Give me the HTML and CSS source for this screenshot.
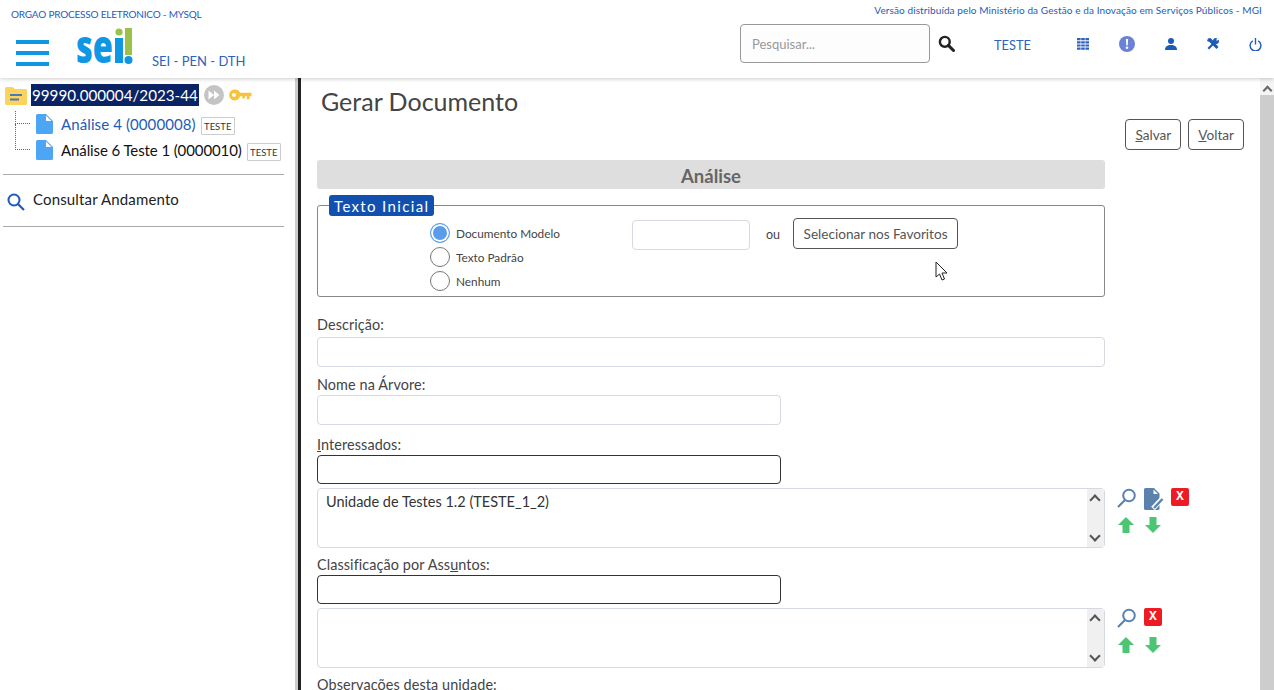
FILE: index.html
```html
<!DOCTYPE html>
<html>
<head>
    <title>SEI - Gerar Documento</title>
    <link rel="stylesheet" href="styles.css">
</head>
<body>
    <header class="topo">
        <div class="topo-linha1">
            <span class="orgao">ORGAO PROCESSO ELETRONICO - MYSQL</span>
            <span class="versao">Versão distribuída pelo Ministério da Gestão e da Inovação em Serviços Públicos - MGI</span>
        </div>
        <div class="topo-linha2">
            <div class="hamburguer"><i></i><i></i><i></i></div>
            <svg class="logo" width="58" height="70" viewBox="0 -15 58 70">
                <text x="0" y="36" class="logo-texto" textLength="37" lengthAdjust="spacingAndGlyphs">se</text>
                <rect x="39" y="11" width="8" height="25" fill="#0f97e4"/>
                <circle cx="43" cy="5" r="3.6" fill="#9cc14b"/>
                <path d="M49 1h7v27h-7z" fill="#9cc14b"/>
                <circle cx="52.5" cy="33" r="4" fill="#0f97e4"/>
            </svg>
            <span class="sistema">SEI - PEN - DTH</span>
            <div class="busca">
                <div class="busca-campo">Pesquisar...</div>
                <svg width="17" height="17" viewBox="0 0 18 18">
                    <circle cx="7.2" cy="7.2" r="5.2" fill="none" stroke="#222" stroke-width="2.6"/>
                    <path d="M11 11l5.4 5.4" stroke="#222" stroke-width="3.2" stroke-linecap="round"/>
                </svg>
            </div>
            <span class="unidade">TESTE</span>
            <div class="topo-icones">
                <svg width="12" height="12" viewBox="0 0 12 12" fill="#2f62c0">
                    <path d="M0 0h3.6v2.2H0zM4.2 0h3.6v2.2H4.2zM8.4 0H12v2.2H8.4zM0 3.2h3.6v2.2H0zM4.2 3.2h3.6v2.2H4.2zM8.4 3.2H12v2.2H8.4zM0 6.4h3.6v2.2H0zM4.2 6.4h3.6v2.2H4.2zM8.4 6.4H12v2.2H8.4zM0 9.6h3.6v2.2H0zM4.2 9.6h3.6v2.2H4.2zM8.4 9.6H12v2.2H8.4z"/>
                </svg>
                <svg width="16" height="16" viewBox="0 0 16 16">
                    <circle cx="8" cy="8" r="8" fill="#6a82d6"/>
                    <path d="M6.9 3h2.2l-.4 6.4H7.3z" fill="#fff"/>
                    <circle cx="8" cy="11.8" r="1.3" fill="#fff"/>
                </svg>
                <svg width="12" height="12" viewBox="0 0 12 12" fill="#1d5bb8">
                    <circle cx="6" cy="3" r="3"/>
                    <path d="M0 12c0-3.6 2.4-5 6-5s6 1.4 6 5z"/>
                </svg>
                <svg width="12" height="12" viewBox="0 0 12 12" fill="#1d5bb8">
                    <path d="M1 .5L3.500 0 5 1.500 11.500 9 9.500 11 2.500 4 0 3z"/>
                    <path d="M.5 10l6-6L8 5.500l-6 6z"/>
                    <circle cx="9" cy="3" r="3"/>
                    <path d="M9.300 2.700L10 -.5 12.500 2z" fill="#fff"/>
                </svg>
                <svg width="13" height="13" viewBox="0 0 13 13" fill="none" stroke="#1d5bb8" stroke-width="1.4">
                    <path d="M3.8 2.8a5.4 5.4 0 1 0 5.4 0"/>
                    <path d="M6.5 0v6.500"/>
                </svg>
            </div>
        </div>
    </header>

    <div class="corpo">
        <aside class="lateral">
            <div class="arvore">
                <div class="processo">
                    <svg class="pasta" width="22" height="18" viewBox="0 0 22 18">
                        <path d="M1.500 0h6l2.500 2h10.500A1.500 1.500 0 0 1 22 3.500v13a1.500 1.500 0 0 1-1.500 1.500h-19A1.500 1.500 0 0 1 0 16.500v-15A1.500 1.500 0 0 1 1.500 0z" fill="#fdd35f"/>
                        <path d="M5 7h12v2H5zM5 11.500h9v2H5z" fill="#4a7bb0"/>
                    </svg>
                    <span class="processo-num">99990.000004/2023-44</span>
                    <svg class="acelerar" width="20" height="20" viewBox="0 0 20 20">
                        <circle cx="10" cy="10" r="10" fill="#c4c4c4"/>
                        <path d="M4.500 5.500l5.500 4.500-5.500 4.500zM10 5.500l5.500 4.500-5.500 4.500z" fill="#fff"/>
                    </svg>
                    <svg class="chave" width="23" height="12" viewBox="0 0 22 12">
                        <path d="M5.500 .5a5.500 5.500 0 0 1 5 3.300H22v3.400h-2v3h-2.600v-3h-2v2.300h-2.600V7.200h-2.300a5.500 5.500 0 1 1-5-6.700zM4.500 4a2 2 0 1 0 0 4 2 2 0 0 0 0-4z" fill="#f6c33b"/>
                    </svg>
                </div>
                <div class="doc doc-primeiro">
                    <span class="linha-pontos"></span>
                    <svg class="doc-icone" width="17" height="20" viewBox="0 0 17 20">
                        <path d="M1.500 0H10l7 7v11.500a1.500 1.500 0 0 1-1.500 1.500h-14A1.500 1.500 0 0 1 0 18.500v-17A1.500 1.500 0 0 1 1.500 0z" fill="#4da6f5"/>
                        <path d="M10 1.500V7h5.500z" fill="#fff"/>
                    </svg>
                    <a class="doc-link">Análise 4 (0000008)</a>
                    <span class="etiqueta">TESTE</span>
                </div>
                <div class="doc">
                    <span class="linha-pontos"></span>
                    <svg class="doc-icone" width="17" height="20" viewBox="0 0 17 20">
                        <path d="M1.500 0H10l7 7v11.500a1.500 1.500 0 0 1-1.500 1.500h-14A1.500 1.500 0 0 1 0 18.500v-17A1.500 1.500 0 0 1 1.500 0z" fill="#4da6f5"/>
                        <path d="M10 1.500V7h5.500z" fill="#fff"/>
                    </svg>
                    <a class="doc-link preto">Análise 6 Teste 1 (0000010)</a>
                    <span class="etiqueta">TESTE</span>
                </div>
            </div>
            <div class="consultar">
                <svg width="18" height="18" viewBox="0 0 18 18" fill="none" stroke="#1d5bb8">
                    <circle cx="7" cy="7" r="5.500" stroke-width="2"/>
                    <path d="M11 11l6 6" stroke-width="2.2"/>
                </svg>
                <span>Consultar Andamento</span>
            </div>
        </aside>

        <main class="conteudo">
            <div class="form-area">
                <h1>Gerar Documento</h1>
                <div class="barra-botoes">
                    <button class="btn"><u>S</u>alvar</button>
                    <button class="btn"><u>V</u>oltar</button>
                </div>
                <div class="faixa">Análise</div>

                <fieldset class="texto-inicial">
                    <legend>Texto Inicial</legend>
                    <div class="opcoes">
                        <label class="opcao"><span class="radio marcado"></span>Documento Modelo</label>
                        <label class="opcao"><span class="radio"></span>Texto Padrão</label>
                        <label class="opcao"><span class="radio"></span>Nenhum</label>
                    </div>
                    <div class="modelo-campo"></div>
                    <span class="ou">ou</span>
                    <button class="btn btn-fav">Selecionar nos Favoritos</button>
                </fieldset>

                <div class="rotulo rotulo-descricao">Descrição:</div>
                <div class="campo inteiro"></div>

                <div class="rotulo rotulo-nome">Nome na Árvore:</div>
                <div class="campo medio"></div>

                <div class="rotulo rotulo-interessados"><u>I</u>nteressados:</div>
                <div class="campo medio escuro"></div>
                <div class="lista-linha">
                    <div class="lista">
                        <span>Unidade de Testes 1.2 (TESTE_1_2)</span>
                        <div class="rolagem"><b class="seta-cima"></b><b class="seta-baixo"></b></div>
                    </div>
                    <div class="acoes">
                        <div class="acoes-linha">
                            <svg width="20" height="20" viewBox="0 0 20 20" fill="none" stroke="#5a82ad"><circle cx="12" cy="7.5" r="5.8" stroke-width="2"/><path d="M8 12l-7 7" stroke-width="2.2"/></svg>
                            <svg width="20" height="22" viewBox="0 0 20 22">
                                <path d="M1.500 0H10l5.500 5.500V20.500a1.500 1.500 0 0 1-1.500 1.500H1.500A1.500 1.500 0 0 1 0 20.500v-19A1.500 1.500 0 0 1 1.500 0z" fill="#5a82ad"/>
                                <path d="M9.500 1.500V6H14z" fill="#fff"/>
                                <path d="M9 20.500l9.500-10" stroke="#fff" stroke-width="5"/>
                                <path d="M10 20l8.500-9" stroke="#5a82ad" stroke-width="2.4"/>
                            </svg>
                            <span class="remover">X</span>
                        </div>
                        <div class="acoes-linha">
                            <svg width="16" height="16" viewBox="0 0 16 16"><path d="M8 0l8 8h-4.500v8h-7V8H0z" fill="#4cc672"/></svg>
                            <svg class="seta-gap" width="16" height="16" viewBox="0 0 16 16"><path d="M8 16L0 8h4.500V0h7v8H16z" fill="#4cc672"/></svg>
                        </div>
                    </div>
                </div>

                <div class="rotulo rotulo-assuntos">Classificação por Ass<u>u</u>ntos:</div>
                <div class="campo medio escuro"></div>
                <div class="lista-linha">
                    <div class="lista">
                        <div class="rolagem"><b class="seta-cima"></b><b class="seta-baixo"></b></div>
                    </div>
                    <div class="acoes">
                        <div class="acoes-linha">
                            <svg width="20" height="20" viewBox="0 0 20 20" fill="none" stroke="#5a82ad"><circle cx="12" cy="7.5" r="5.8" stroke-width="2"/><path d="M8 12l-7 7" stroke-width="2.2"/></svg>
                            <span class="remover">X</span>
                        </div>
                        <div class="acoes-linha">
                            <svg width="16" height="16" viewBox="0 0 16 16"><path d="M8 0l8 8h-4.500v8h-7V8H0z" fill="#4cc672"/></svg>
                            <svg class="seta-gap" width="16" height="16" viewBox="0 0 16 16"><path d="M8 16L0 8h4.500V0h7v8H16z" fill="#4cc672"/></svg>
                        </div>
                    </div>
                </div>

                <div class="rotulo rotulo-obs">Observações desta unidade:</div>
            </div>

            <div class="barra-rolagem"><b class="seta-cima"></b><i class="polegar"></i></div>

            <svg class="cursor" width="13" height="20" viewBox="0 0 13 20">
                <path d="M1 1v15l3.500-3 2.500 6 2.500-1-2.500-6H12z" fill="#fff" stroke="#222" stroke-width="1"/>
            </svg>
        </main>
    </div>
</body>
</html>
```

FILE: styles.css
```css
* {
    box-sizing: border-box;
}
html, body {
    height: 100%;
}
body {
    margin: 0;
    overflow: hidden;
    background-color: #fff;
    color: #333;
    font-family: Lato, "Liberation Sans", sans-serif;
    font-size: 14px;
}
svg {
    display: block;
    flex: none;
}

/* topo */
.topo {
    height: 78px;
    padding: 3px 12px 0 11px;
    background-color: #fff;
    box-shadow: 0 1px 4px rgba(0, 0, 0, 0.2);
    position: relative;
    z-index: 2;
}
.topo-linha1 {
    display: flex;
    justify-content: space-between;
    height: 17px;
    color: #1d5bb8;
    font-size: 10px;
    line-height: 15px;
}
.orgao {
    margin-top: 4px;
    letter-spacing: -0.02em;
}
.versao {
    letter-spacing: 0.01em;
}
.topo-linha2 {
    display: flex;
    align-items: flex-start;
}
.hamburguer {
    width: 33px;
    margin: 20px 0 0 5px;
    display: flex;
    flex-direction: column;
    gap: 7px;
}
.hamburguer i {
    display: block;
    height: 4px;
    background-color: #0f97e4;
}
.logo {
    margin: -8px 0 -8px 27px;
}
.logo-texto {
    font-family: "Open Sans", sans-serif;
    font-size: 46px;
    font-weight: 800;
    fill: #0f97e4;
}
.sistema {
    margin: 33px 0 0 18px;
    width: 99px;
    color: #2b63bd;
    font-size: 13px;
    white-space: nowrap;
}
.busca {
    margin: 4px 0 0 489px;
    display: flex;
    align-items: center;
    gap: 8px;
}
.busca-campo {
    width: 190px;
    height: 39px;
    padding: 0 11px;
    border: 1px solid #999;
    border-radius: 4px;
    background-color: #fdfdfd;
    color: #999;
    font-size: 13px;
    line-height: 39px;
}
.unidade {
    margin: 17px 0 0 39px;
    width: 45px;
    color: #2b63bd;
    font-size: 12.8px;
    line-height: 16px;
}
.topo-icones {
    margin: 16px 0 0 38px;
    display: flex;
    align-items: center;
    gap: 30px;
    height: 16px;
}

/* corpo */
.corpo {
    display: flex;
    height: 612px;
}
.lateral {
    width: 301px;
    flex: none;
    padding: 6px 14px 0 3px;
    border-right: 3px solid #222;
    box-shadow: inset -3px 0 0 #ccc;
}
.processo {
    display: flex;
    align-items: center;
    height: 22px;
    margin-left: 2px;
}
.pasta {
    margin-top: 2px;
}
.processo-num {
    margin-left: 4px;
    padding: 0 1px;
    background-color: #0a2364;
    color: #fff;
    font-size: 15.2px;
    line-height: 22px;
    white-space: nowrap;
}
.acelerar {
    margin-left: 5px;
}
.chave {
    margin-left: 5px;
}
.arvore {
    height: 91px;
    border-bottom: 1px solid #aaa;
}
.doc {
    display: flex;
    align-items: center;
    height: 26px;
    margin-left: 12px;
    position: relative;
}
.doc-primeiro {
    margin-top: 5px;
}
.doc-icone {
    margin-left: 21px;
}
.linha-pontos {
    width: 15px;
    height: 26px;
    border-left: 1px dotted #666;
    border-bottom: 1px dotted #666;
    position: absolute;
    left: 0;
    bottom: 13px;
}
.doc-primeiro .linha-pontos {
    height: 13px;
}
.doc-link {
    margin-left: 8px;
    color: #1d5bb8;
    font-size: 15px;
    letter-spacing: 0.1px;
    white-space: nowrap;
}
.doc-link.preto {
    color: #111;
    letter-spacing: -0.1px;
}
.etiqueta {
    margin: 3px 0 0 5px;
    width: 34px;
    height: 18px;
    border: 1px solid #ccc;
    border-radius: 1px;
    color: #333;
    font-size: 9.5px;
    line-height: 17px;
    text-align: center;
}
.consultar {
    display: flex;
    align-items: flex-start;
    gap: 8px;
    height: 52px;
    padding: 15px 0 0 4px;
    border-bottom: 1px solid #aaa;
    color: #222;
    font-size: 15px;
    letter-spacing: 0.15px;
    line-height: 18px;
}
.consultar svg {
    margin-top: 3px;
}

/* conteudo */
.conteudo {
    flex: 1;
    position: relative;
    display: flex;
    overflow: hidden;
}
.form-area {
    width: 959px;
    padding: 8px 0 0 16px;
}
h1 {
    margin: 0 0 0 4px;
    height: 28px;
    color: #444;
    font-size: 25px;
    font-weight: 400;
    line-height: 30px;
}
.barra-botoes {
    display: flex;
    justify-content: flex-end;
    gap: 7px;
    width: 927px;
    margin-top: 5px;
    height: 41px;
}
.btn {
    height: 31px;
    padding: 0 9px;
    border: 1px solid #555;
    border-radius: 4px;
    background-color: #fff;
    color: #555;
    font-family: inherit;
    font-size: 13.6px;
}
.faixa {
    width: 788px;
    height: 29px;
    border-radius: 3px;
    background-color: #dedede;
    color: #666;
    font-size: 18.5px;
    font-weight: 700;
    line-height: 33px;
    text-align: center;
}
.texto-inicial {
    position: relative;
    display: flex;
    align-items: flex-start;
    width: 788px;
    height: 92px;
    margin: 16px 0 0;
    padding: 0;
    border: 1px solid #888;
    border-radius: 3px;
}
.texto-inicial legend {
    position: absolute;
    left: 11px;
    top: -11px;
    height: 21px;
    padding: 0 5px;
    border-radius: 3px;
    background-color: #1250b0;
    color: #fff;
    font-size: 15px;
    letter-spacing: 0.09em;
    line-height: 22px;
}
.opcoes {
    margin: 15px 0 0 112px;
    width: 202px;
}
.opcao {
    display: flex;
    align-items: center;
    gap: 6px;
    height: 24px;
    color: #444;
    font-size: 11.8px;
}
.radio {
    width: 20px;
    height: 20px;
    border: 1px solid #777;
    border-radius: 50%;
    background-color: #fff;
}
.radio.marcado {
    border: 1px solid #5a9bea;
    box-shadow: inset 0 0 0 2px #fff;
    background-color: #5a9bea;
}
.modelo-campo {
    width: 118px;
    height: 30px;
    margin-top: 14px;
    border: 1px solid #d5d9e0;
    border-radius: 4px;
}
.ou {
    margin: 21px 0 0 16px;
    color: #444;
    font-size: 12.5px;
}
.btn-fav {
    margin: 12px 0 0 13px;
    width: 165px;
    height: 31px;
    padding: 0;
}
.rotulo {
    height: 20px;
    color: #444;
    font-size: 14.4px;
    letter-spacing: 0.1px;
    line-height: 20px;
    white-space: nowrap;
}
.rotulo-descricao {
    height: 22px;
    margin-top: 18px;
}
.rotulo-nome {
    margin-top: 8px;
}
.rotulo-interessados {
    margin-top: 10px;
}
.rotulo-assuntos,
.rotulo-obs {
    margin-top: 7px;
}
.campo {
    height: 30px;
    border: 1px solid #d5d9e0;
    border-radius: 4px;
}
.campo.inteiro {
    width: 788px;
}
.campo.medio {
    width: 464px;
}
.campo.escuro {
    height: 29px;
    border-color: #333;
}
.lista-linha {
    display: flex;
    margin-top: 4px;
    height: 60px;
}
.lista {
    position: relative;
    width: 788px;
    height: 60px;
    padding: 4px 0 0 8px;
    border: 1px solid #d5d9e0;
    border-radius: 4px;
    color: #333;
    font-size: 14.5px;
}
.rolagem {
    position: absolute;
    right: 0;
    top: 0;
    bottom: 0;
    width: 17px;
    background-color: #f0f0f0;
}
.seta-cima, .seta-baixo {
    position: absolute;
    left: 4px;
    width: 8px;
    height: 8px;
    border-left: 2px solid #555;
    border-top: 2px solid #555;
    transform: rotate(45deg);
}
.seta-cima {
    top: 7px;
}
.seta-baixo {
    bottom: 7px;
    transform: rotate(225deg);
}
.acoes {
    margin-left: 12px;
}
.acoes-linha {
    display: flex;
    align-items: flex-start;
    gap: 7px;
    height: 28px;
}
.acoes-linha + .acoes-linha {
    padding: 1px 0 0 1px;
}
.seta-gap {
    margin-left: 4px;
}
.remover {
    width: 18px;
    height: 18px;
    border-radius: 2px;
    background-color: #ed1c24;
    color: #fff;
    font-family: "Liberation Mono", monospace;
    font-size: 13px;
    font-weight: 700;
    line-height: 18px;
    text-align: center;
}
.barra-rolagem {
    position: absolute;
    right: 0;
    top: 0;
    bottom: 0;
    width: 14px;
    background-color: #f4f4f4;
}
.barra-rolagem .seta-cima {
    left: 4px;
    top: 9px;
    width: 7px;
    height: 7px;
    border-color: #666;
}
.polegar {
    position: absolute;
    top: 17px;
    left: 0;
    right: 0;
    bottom: 0;
    background-color: #cdcdcd;
}
.cursor {
    position: absolute;
    left: 634px;
    top: 183px;
}
```
